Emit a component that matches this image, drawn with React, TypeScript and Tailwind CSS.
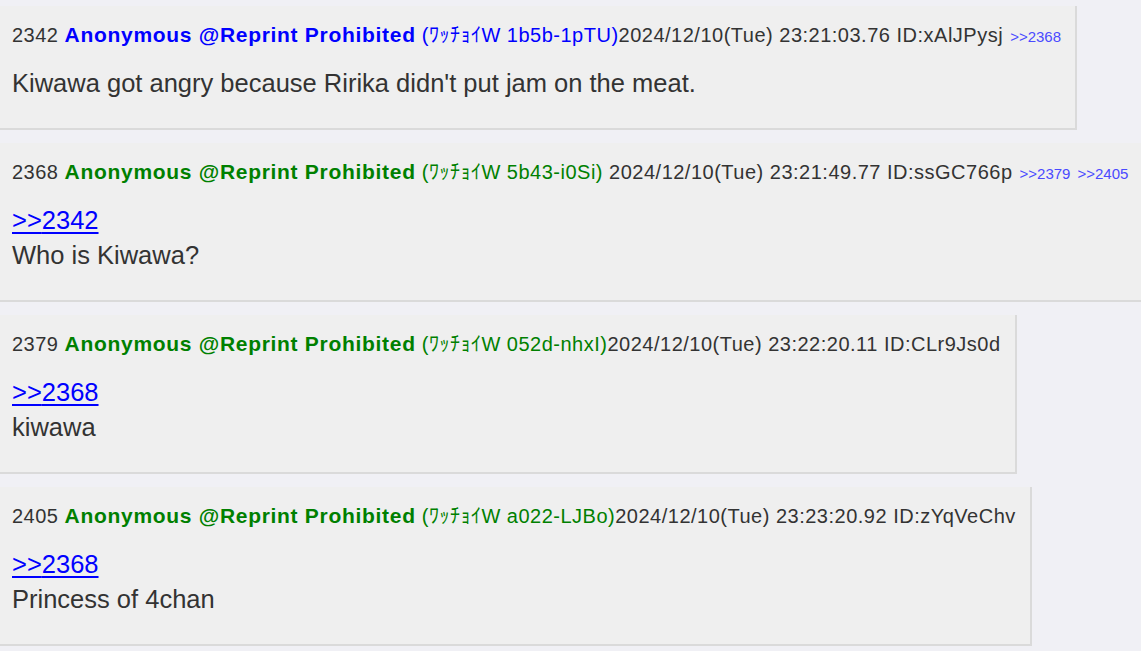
type Post = {
  no: number
  color: 'blue' | 'green'
  trip: string
  spaceAfterTrip: boolean
  date: string
  id: string
  replies: number[]
  quote?: number
  body: string
}

const posts: Post[] = [
  {
    no: 2342,
    color: 'blue',
    trip: '(ﾜｯﾁｮｲW 1b5b-1pTU)',
    spaceAfterTrip: false,
    date: '2024/12/10(Tue) 23:21:03.76',
    id: 'xAlJPysj',
    replies: [2368],
    body: "Kiwawa got angry because Ririka didn't put jam on the meat.",
  },
  {
    no: 2368,
    color: 'green',
    trip: '(ﾜｯﾁｮｲW 5b43-i0Si)',
    spaceAfterTrip: true,
    date: '2024/12/10(Tue) 23:21:49.77',
    id: 'ssGC766p',
    replies: [2379, 2405],
    quote: 2342,
    body: 'Who is Kiwawa?',
  },
  {
    no: 2379,
    color: 'green',
    trip: '(ﾜｯﾁｮｲW 052d-nhxI)',
    spaceAfterTrip: false,
    date: '2024/12/10(Tue) 23:22:20.11',
    id: 'CLr9Js0d',
    replies: [],
    quote: 2368,
    body: 'kiwawa',
  },
  {
    no: 2405,
    color: 'green',
    trip: '(ﾜｯﾁｮｲW a022-LJBo)',
    spaceAfterTrip: false,
    date: '2024/12/10(Tue) 23:23:20.92',
    id: 'zYqVeChv',
    replies: [],
    quote: 2368,
    body: 'Princess of 4chan',
  },
]

function PostBox({ post }: { post: Post }) {
  const nameColor = post.color === 'blue' ? 'text-[#0000ff]' : 'text-[#008000]'
  return (
    <div className="w-max bg-[#efefef] border-r-2 border-b-2 border-[#dadada] pl-3 pr-[14px] pt-4 pb-[27px]">
      <div className="h-[26px] leading-[26px] text-[20px] text-[#333333] whitespace-nowrap tracking-[0.5px]">
        <span>{post.no} </span>
        <span className={`font-bold text-[21px] tracking-[0.7px] ${nameColor}`}>Anonymous @Reprint Prohibited</span>{' '}
        <span className={nameColor}>{post.trip}</span>
        {post.spaceAfterTrip && ' '}
        <span>
          {post.date} ID:{post.id}
        </span>
        {post.replies.map((r) => (
          <span key={r} className="ml-[7px] text-[15px] tracking-normal text-[#4a4aff]">
            &gt;&gt;{r}
          </span>
        ))}
      </div>
      <div className="mt-[18px] text-[25.5px] leading-[35px] text-[#333333]">
        {post.quote && (
          <div>
            <span className="text-[#0000ff] underline underline-offset-[3px]">&gt;&gt;{post.quote}</span>
          </div>
        )}
        <div>{post.body}</div>
      </div>
    </div>
  )
}

export default function App() {
  return (
    <div
      className="w-[1141px] h-[651px] overflow-hidden bg-[#f0f0f5] pt-[6px] flex flex-col items-start gap-[13px]"
      style={{ fontFamily: '"Liberation Sans", Arial, "Noto Sans CJK JP", sans-serif' }}
    >
      {posts.map((p) => (
        <PostBox key={p.no} post={p} />
      ))}
    </div>
  )
}
